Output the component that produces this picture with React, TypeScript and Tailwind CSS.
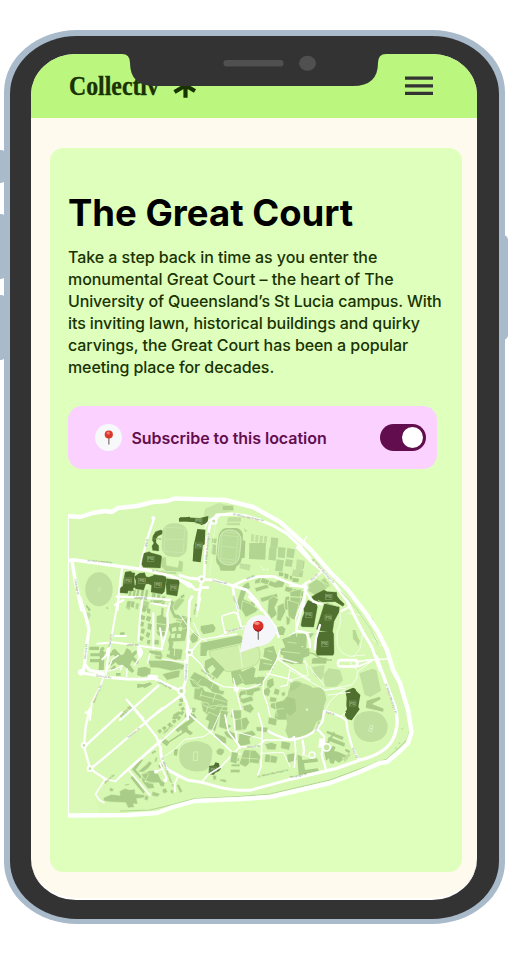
import React from "react";

const GROUND = "#d6f8b2";
const LIGHT = "#bfe09f";
const MID = "#a9cc88";
const DARK = "#4f702f";

type SheetProps = { x: number; y: number; children: React.ReactNode };

/* A map sheet: drawn at three times the scale of the page. */
function Sheet({ x, y, children }: SheetProps) {
  return (
    <g transform={`translate(${x} ${y}) scale(.33333)`} stroke={GROUND} strokeWidth="2">
      {children}
    </g>
  );
}

function Road({ d, w = 7 }: { d: string; w?: number }) {
  return <path d={d} fill="none" stroke="#fff" strokeWidth={w} strokeLinejoin="round" strokeLinecap="round" />;
}

function Gaps({ d, w = 3 }: { d: string; w?: number }) {
  return <path d={d} fill="none" stroke={GROUND} strokeWidth={w} />;
}

function Street({ x, y, r = 0, children }: { x: number; y: number; r?: number; children: string }) {
  return (
    <text transform={`translate(${x} ${y}) rotate(${r})`} fontSize="8" fill="#76905c" stroke="none" fontFamily="Inter, sans-serif">
      {children}
    </text>
  );
}

function Parking({ x, y }: { x: number; y: number }) {
  return (
    <g>
      <rect x={x - 10} y={y - 7} width="20" height="15" fill="none" stroke="#9db483" strokeWidth="1.3" />
      <text x={x} y={y + 4} fontSize="9" fontWeight="600" textAnchor="middle" fill="#b5ca9d" stroke="none" fontFamily="Inter, sans-serif">
        P10
      </text>
    </g>
  );
}

function CampusMap() {
  return (
    <svg viewBox="68 490 360 335" className="block h-[335px] w-[360px]">
      <path
        fill={GROUND}
        d="M68 516L80 517L93 513L112 510L118 508L137 506L153 502L167 501L175 498L225 500L253 507L280 522L310 549L330 572L348 590L367 615L378 632L387 650L393 670L400 683L408 710L412 732L408 743L400 752L387 762L357 773L330 783L300 790L270 797L240 799L195 801L173 807L157 813L68 815Z"
      />
      <path fill="#ddfcbb" opacity=".6" d="M68 562L75 562L82 592L89 640L84 672L98 673L100 680L92 712L82 745L90 769L106 778L94 794L100 813L68 815Z" />

      <Sheet x={60} y={490}>
        <rect x="306" y="100" width="76" height="101" rx="30" fill={LIGHT} stroke="none" transform="rotate(3 344 150)" />
        <path d="M316 112L374 115L370 188L312 184ZM314 148H372" fill="none" stroke="#d0ecb5" strokeWidth="1.5" />
        <path d="M302 203L318 200L320 226L353 232L357 210L370 215L368 246L318 244L303 230Z" fill={MID} opacity=".7" />
        <ellipse cx="117" cy="298" rx="41" ry="51" fill={LIGHT} stroke="none" />
        <ellipse cx="118" cy="299" rx="2.500" ry="7" fill="none" stroke="#d8f2be" strokeWidth="1.500" />
        <path d="M80 344l10 13-12-5ZM140 350l6 5-6 2Z" fill={MID} stroke="none" />
        <path d="M208 298l9 2-5 24-9-2ZM220 298l9 1-4 25-9-2ZM231 297l9 2-5 25-9-2ZM244 296l9 3-4 34-10-3ZM257 298l9 2-5 32-9-2ZM276 306l13 3-6 35-12-2ZM291 311l12 2-5 30-11-3ZM306 317l12 2-5 27-11-2Z" fill={MID} />
        <path d="M200 336l17-4-8 30-12-8ZM250 330l18 5-3 23-18-6ZM337 340l25-20 13 10-26 32-15-5ZM227 338l12 3-5 18-9-2Z" fill={MID} opacity=".75" />
        <Road d="M25 211L45 210L130 222L185 230L260 240L330 258L358 268L390 290" w={10} />
        <Road d="M35 210L47 280L65 360" w={10} />
        <Road d="M282 86L262 145L240 232M187 230L180 280L172 360M170 320L240 322L330 330M190 330L165 345" w={7} />
        <circle cx="280" cy="84" r="6" fill="#fff" stroke="none" />
        <path d="M196 246l17-2 3 4 9 1-3 14 2 26-5 7 1 6h-16l-1 8-23-2 1-14 8-6 2-20ZM238 250l16-2 4 12 8 2 11-4 3-1 1-3 27 3 9 3 2 8-6 37-7 7-33-6 2-20-10-5-8 1-6 18-25-4 2-23-5-13ZM320 266l36 4 2 8-7 40-31-5-2-30ZM252 190l16-5 4 3 28 8 5 3-4 35-51-2-5-9 3-17ZM279 138l8-13 15-5 5 2-1 10-12 6-6 8v12l8 9v16l-18-2-2-13 6-9-5-8Z" fill={DARK} stroke={DARK} strokeWidth="1" />
        <path d="M357 84l33-4v12l-33 3Z" fill={DARK} stroke="none" />
        <path d="M218 286l17 0-5 8-14-2Z" fill={DARK} stroke="none" />
        <Parking x={204} y={271} /><Parking x={246} y={272} /><Parking x={294} y={285} /><Parking x={341} y={292} /><Parking x={272} y={207} />
        <Street x={82} y={214} r={5}>Sir Fred Schonell Dr</Street>
        <Street x={275} y={244} r={7}>Sir Fred Schonell Dr</Street>
        <Street x={43} y={268} r={80}>Coldridge St</Street>
        <Street x={260} y={170} r={-78}>Mill St</Street>
        <Street x={278} y={151}>P9 P10</Street>
        <Street x={222} y={328}>Upland Rd</Street>
      </Sheet>

      <Sheet x={180} y={490}>
        <path d="M75 56l42-17 46 12-4 12-55 12-12 11-22 2Z" fill={LIGHT} stroke="none" opacity=".7" />
        <path d="M126 46l34 0 2 16-35 0Z" fill={MID} opacity=".8" />
        <path d="M0 82l60 2 25-6-2 20-18 7-20-8L0 94Z" fill={DARK} stroke="none" />
        <path d="M52 117l24 2-2 44-5 3-7 51-24-3 3-48Z" fill={DARK} stroke="none" />
        <Parking x={56} y={92} /><Parking x={57} y={166} />
        <path d="M115 142q2-22 22-28h34q15 5 18 20l-1 16 8 3-2 50-9 2q-1 16-15 24l-6 13h-42l-5-15q-12-10-8-27Z" fill={MID} stroke="none" />
        <rect x="116" y="120" width="65" height="105" rx="29" fill="#b9dc98" stroke="#e1f5cb" strokeWidth="2" transform="rotate(6 149 172)" />
        <path d="M126 125l50 5-10 90-44-6ZM123 168l46 5M125 135l48 5M122 205l44 6" fill="none" stroke="#d2ebb9" strokeWidth="1.500" />
        <path d="M96 145l15 1-3 14-13-2ZM97 162l11 3-1 29-13-2ZM208 159l50 0-2 50-49-2Z" fill={MID} stroke="none" opacity=".8" />
        <path d="M145 82h38v13h-42ZM141 98h39v8h-40ZM180 220l32 4-3 18-31-7ZM190 114l13 8-7 5Z" fill={LIGHT} stroke="none" />
        <path d="M214 133h8l-1 22-8-1ZM227 135h9l-2 22-9-1ZM240 137h9l-2 22-9-1ZM253 138h9l-2 20-9-1Z" fill={LIGHT} stroke="none" />
        <path d="M273 142l22 3-3 30-21-3ZM268 172l22 3-3 37-22-3ZM295 171l22 2-3 32-21-3ZM290 208l22 3-5 34-22-3ZM322 174l23 4-4 27-22-3ZM318 207l21 3-4 21-21-3ZM352 211l22 3-3 23-22-3ZM349 240l21 2-3 20-22-3Z" fill="#b5d896" stroke="none" />
        <path d="M297 246l14 3-2 10-13-2ZM314 250l12 3-2 13-11-1ZM330 257l7 1-1 11-7-1ZM338 263l19 3-2 11-18-2Z" fill={MID} stroke="none" />
        <path d="M244 228v7M246 239h11M262 242v-8" stroke="#fff" />
        <path d="M183 296q8-17 24-20l4 16-13 15-7 20 22 10 6-18 12 10-10 31h-45l-5-24ZM225 270l20-8 40 15 12-8 20 5-9 18-21 2-44-16-19 4ZM224 294l39-12 4 12-39 12ZM240 324l51-14 3 12-49 15ZM317 288l63 18-5 17-62-20ZM316 320l14-2-4 24 28 4-2 14h-42ZM340 315l35 10-4 25-33-8Z" fill={MID} />
        <Gaps d="M246 262L240 276M270 270L264 284M340 294L337 308M360 298L356 316M200 300L214 300" />
        <path d="M0 318l12-7 3 9-12 8Z" fill={MID} />
        <Road d="M0 256L30 265L57 267L100 270L158 287L200 300L232 335L245 360" w={9} />
        <Road d="M72 260L76 180L90 103M66 267L58 310L53 360M158 287L162 315L175 360M158 287L195 270L232 260L280 259L315 274L350 286L390 294M376 290L370 360M62 299L45 298L30 282L0 269M69 293L84 292" w={8} />
        <Road d="M96 94L110 75L155 72L195 77L240 90L280 107L320 130L360 168L390 205" w={9} />
        <Road d="M75 115L80 100L91 88L112 86L120 73M380 140L365 165" w={4} />
        <circle cx="101" cy="93" r="8" fill={LIGHT} stroke="#fff" strokeWidth="7" />
        <circle cx="65" cy="267" r="8" fill={LIGHT} stroke="#fff" strokeWidth="7" />
        <Road d="M107 96L101 140L89 255" w={1} />
        <Street x={158} y={75} r={12}>Sir William MacGregor Dr</Street>
        <Street x={80} y={222} r={-85}>Sir William MacGregor Dr</Street>
        <Street x={96} y={274} r={12}>Schonell Rd</Street>
        <Street x={200} y={269} r={-20}>Mill Rd</Street>
        <Street x={158} y={318} r={72}>Glasshouse</Street>
      </Sheet>

      <Sheet x={290} y={550}>
        <path d="M20 28l20 3-4 38-18-5ZM10 58l20 3-5 20-20-4Z" fill={LIGHT} stroke="none" />
        <path d="M55 104l25-17 39 20-37 33-28-17ZM92 90l12-7 18 24-9 8Z" fill={MID} opacity=".75" />
        <path d="M0 125l34-8-4 52-18 35-12-4Z" fill={MID} />
        <path d="M0 250l52 0-2 45-12 2-4 45H0ZM56 248l18 2-14 17ZM64 342l2-18 27-3 20 3-4 18Z" fill={MID} />
        <path d="M38 305l32 6 28 18 28 1" fill="none" stroke={MID} strokeWidth="4" />
        <Gaps d="M0 140L32 142M0 165L28 168M0 268L26 268M20 250L20 260M0 290L40 290M16 300V340" />
        <path d="M64 141l13-8 25-13 10 5 28 2 1 11 7 10 15 14-4 7-23-14-36 1-14-1-15-6ZM54 151l12 4 13 6 3 10-11 60-35-1-3-4 4-22 6-15-2-12ZM103 162l7-2 38 11-1 15-15 28-5 34-45-7-2-5ZM85 246l43 0 3 6 1 58-3 6H82l-3-5V250Z" fill={DARK} stroke={DARK} strokeWidth="1" />
        <path d="M84 150L100 161L96 170M104 160L145 169" fill="none" stroke={GROUND} strokeWidth="2" />
        <Parking x={56} y={195} /><Parking x={115} y={202} /><Parking x={104} y={281} /><Parking x={116} y={140} />
        <path d="M188 240l8 0 8 24 6 9-6 16-5-12-10-10ZM240 205l7-2 3 11-7-1Z" fill={MID} stroke="none" opacity=".7" />
        <Road d="M0 106L35 109L46 100L66 90L95 65M47 103L47 125L70 155L95 163M47 120L35 175L18 242L38 245L50 250L59 275L60 292M75 298L78 265L90 225M155 183L175 172" w={7} />
        <Road d="M22 -8L62 33L95 60L130 98L170 150L190 190L215 240L245 290L270 360" w={9} />
        <Road d="M150 183Q155 230 141 245L142 285Q155 315 180 319L225 315M248 268L275 288M220 240L211 295L190 320M175 190L215 196L225 215L263 270" w={2} />
        <rect x="144" y="330" width="59" height="19" rx="8" fill="none" stroke="#fff" strokeWidth="7" />
        <Road d="M203 335L235 330L290 327M203 350L245 332" w={5} />
        <path d="M152 124l46 50 45 66 22 45" fill="none" stroke="#bfe1a0" strokeWidth="3" />
        <Street x={66} y={30} r={48}>Sir William MacGregor Dr</Street>
        <Street x={65} y={93} r={-42}>Blair Dr</Street>
      </Sheet>

      <Sheet x={60} y={600}>
        <path d="M75 42q12-12 18 3l-10 18Z" fill={LIGHT} stroke="none" />
        <path d="M77 13l16 17-7 4ZM140 22l5 2-3 2ZM203 3l8 1-3 17-8-2ZM214 4l10 1-3 18-8-2ZM181 97l13 0-1 8-14-1ZM168 219h14v8h-14Z" fill={MID} stroke="none" />
        <path d="M89 140h28v10H88ZM122 143l8-3 4 7-5 5 5 4-3 54-15 0 1-23H90v-10h29v-8H91v-9h27ZM132 158l12-8 5 8-9 12Z" fill={MID} stroke="none" />
        <path d="M157 150l8-4 18 20 8-3 9-19 11 7 4 9 14-10 5 6-13 14 16 15-6 8-15-12-6 13 13 19-7 6-28-25-13 1-8-8-15 12-7-7 22-20-7-8-7 5-6-6 8-7ZM151 206l12-10 6 6-12 10ZM234 204l22-4 16 6-2 22-24 2-15-5ZM231 251l20 2 20-6 5 6-21 11-8-3-15 4Z" fill={MID} stroke="none" />
        <path d="M249 17l9 0 2 14-6 6-9-3ZM261 25l11 2-2 14-9-3ZM243 44l13 5-3 12-11-3ZM262 47l12 5-5 13-12-5ZM244 64l9 4-4 13-10-4ZM264 70l12 3-3 18-11-5ZM245 85l10 3-3 14-10-4ZM261 96l10 4-5 14-9-6ZM241 108l11 4-5 11-9-4ZM263 119l9 2-4 14-8-6Z" fill={MID} stroke="none" />
        <path d="M276 0h33v8l-28 4ZM289 48l13-4 2-22 8 2-1 25 10 4-5 58-21-4-6-10ZM335 0l10 6-7 15 8 21 43 9v13l-48-10-16-35ZM318 74l32-8 23 3 10 18-7 36-34 3-4 18 31 4-5 30-18 3-28-10 9-36-4-14 8-20ZM284 118l14 2-1 15-20-1ZM268 150l36 4 4 15-6 10-18-4 1-11-19-4ZM263 181l65 0 33 9 14 5-6 14-35 4-39-9-24-1ZM306 222l56-15-5 25-36 9Z" fill={MID} />
        <path d="M336 84l12-4 2 12-14 3ZM355 80l12 2-2 12-9-2ZM334 102l12-2-2 14-11 1ZM352 101l12 2-3 12-11-2ZM322 150l8 2-2 12-8-2Z" fill={GROUND} stroke="none" />
        <Gaps d="M338 126L376 128M345 128L343 168M286 70L316 74M290 92L316 95M268 166L302 168" w={2.5} />
        <path d="M336 357l5-14 9-5 7 6-8 13ZM357 340l10-8 6 5-7 10ZM361 325l10-5 4 9-9 3ZM358 297l13-4-3 13-9 0ZM356 311l11-2-2 8-8 1Z" fill={MID} stroke="none" />
        <Road d="M60 -5L80 58L87 90L78 150L74 192L68 220" w={10} />
        <Road d="M74 192L88 210L133 222M62 218L105 225L140 232L200 237L250 238L283 235L305 246L345 265L365 274M290 230L267 228" w={9} />
        <Road d="M175 -5L160 80L146 160L137 222M112 131L160 127L220 135L306 147M146 160L127 178M130 232L120 260L95 310L90 360M300 85L305 115L306 147M247 0L240 50L235 125M280 40L280 148M330 10L322 40L324 80L305 145M275 10L320 18M165 108L198 108" w={6} />
        <path d="M232 134l14 12 4 12-7 15-8-3-5-16ZM140 145h10l-1 22-14 2Z" fill="#fff" stroke="none" />
        <Road d="M137 213Q155 190 155 180L175 166M110 213Q155 216 172 204L187 197L181 210M200 230l1-24M240 170L223 196M377 155L390 120M375 180L374 262M262 190L270 160M310 178L378 187" w={4} />
        <circle cx="64" cy="217" r="10" fill="#fff" stroke="none" />
        <Road d="M295 257L180 360M200 299L250 356M365 285L270 355L260 365M371 287L385 325L390 360" w={7} />
        <circle cx="365" cy="273" r="9" fill="#c4e6a4" stroke="#fff" strokeWidth="7" />
        <Street x={77} y={178} r={-84}>Carmody Rd</Street>
        <Street x={107} y={229} r={8}>Carmody Rd</Street>
        <Street x={291} y={246} r={28}>Carmody Rd</Street>
        <Street x={103} y={310} r={-68}>Blamoorong Rd</Street>
        <Street x={151} y={140} r={-80}>Walcott St</Street>
        <Street x={200} y={137}>Union Rd</Street>
        <Street x={349} y={63} r={7}>Highside St</Street>
        <Street x={181} y={350} r={-43}>Sherwin Rd</Street>
      </Sheet>

      <Sheet x={180} y={600}>
        <path d="M8 58l20-10 7 8-6 24-20 7-9-13ZM188 2l25 10 22 16-10 10-28 14-13-23ZM265 0l16-12 15 10-12 25 8 20-18 14-12-20ZM292 18l19-10 6 26-15 30-12-3ZM322 0l35 10-12 50-20-7ZM318 48l14 4-3 21-10 3Z" fill={MID} />
        <path d="M62 78l37-6 8 12-5 12-32 7-8-12ZM32 108l10-12 14 9-4 18-14 7-7-11ZM76 126l105-20 8 9-4 14-104 23-2 16h-18l1-39ZM254 145l27-8 8 25-10 21-29-13ZM241 176l26 5 16 6-5 23-42 2ZM278 160l15 5-11 37-6-15ZM306 118l25-9 35 8-2 28h24v22l-18 6v18l-26-4-5 6-32-9 4-17-10-5v-15l15-5ZM292 82l15-4 10 9-6 18-18 0Z" fill={MID} stroke="none" />
        <path d="M89 153l101-21 45 10q13 28-6 51-30 17-83 22-27 0-57-50Z" fill="#d0efaa" stroke="#b4d796" strokeWidth="2" />
        <path d="M177 134l10 68" stroke="#fff" strokeWidth="1.500" />
        <path d="M75 182l23-10 36 36-23 28-18-14 14-15-10-13-15 13 8 14-17-9ZM153 215l28-7 5 7 33-15 8 7-5 24 15 4-5 15-35 5-9-7-18 9-12-9ZM232 230h22l-2 17-10 12-14-8ZM263 241l16-6 3 20-15 12-7-12Z" fill={MID} stroke="none" />
        <path d="M43 215l31 16 43 28 2 11 15 3-4 12-30-6-20-18-28-5-22-23ZM27 237l16 3 20 20-7 7-20-7ZM43 264l24-4 8 13 44 10 25 18-2 20-31-3-8 10-33-12-5-12-24-7ZM62 306l22 3 5 10 36-5 19 8-7 31-50-2-18-17ZM35 322l14 2-4 15-12-2ZM18 336l26 5 7 14-24 4-15-9ZM180 273l59-13 4 11-20 6-5 12-25-5-15 5ZM184 297l32-10 5 15-34 10ZM188 318l24-7 11 15-12 14-20-9ZM250 270l14-10 8 12-5 17-17-3ZM284 264l16 5-4 17-16-3ZM271 290l20 3-3 15-20-3ZM303 279l11-5 3 11-10 5ZM272 310l38-9 13-15 7 20 20 12-4 30-14 12h-50l5-30-16-8Z" fill={MID} />
        <Gaps d="M62 238L52 252M100 250L92 268M66 272L60 292M108 280L98 306M84 318L76 345M128 318L118 350M60 285L140 306M178 222L190 246M262 152L278 156M250 190L276 194M322 126L350 130M306 154L360 160M284 304L292 350M276 330L340 322M196 266L200 284" w={2} />
        <path d="M323 290q0-30 22-38 25-7 45 8v100h-47q4-22-4-38-14-15-16-32Z" fill="#b7d995" stroke="none" />
        <Road d="M63 -8L50 50M0 45Q45 115 80 124M108 112L180 82L210 74M166 8L182 65L183 80M40 68L60 108" w={3} />
        <path d="M126 58q-4-11 8-13l26-8q12-1 13 10l13 40M134 98l52-14M126 58l8 36" fill="none" stroke="#fff" strokeWidth="5" strokeLinecap="round" />
        <Road d="M207 -10L250 32L285 80L296 110M36 -10L28 5L24 120L19 235L4 280L20 310L24 360" w={8} />
        <Road d="M300 150L290 180L265 225L250 245L250 280L263 315L272 360M350 95L347 55L370 -5M345 97L330 105M350 96L390 98M35 165L65 195L90 240L130 260L205 266L242 252M160 235L169 270L183 330M35 153L55 128L65 118L170 102M34 165L47 178M295 178L335 205L390 240M330 208L322 255L302 260M296 173L345 187L375 185M260 220L322 235L345 250" w={4} />
        <circle cx="28" cy="157" r="8" fill={LIGHT} stroke="#fff" strokeWidth="6" />
        <circle cx="4" cy="273" r="9" fill={LIGHT} stroke="#fff" strokeWidth="6" />
        <circle cx="169" cy="268" r="8" fill="#fff" stroke="none" />
        <Street x={44} y={45} r={-77}>Union Rd</Street>
        <Street x={19} y={242} r={-86}>Chancellor Dr</Street>
        <Street x={62} y={212} r={34}>University Dr</Street>
        <Street x={140} y={98} r={-15}>Campbell Rd</Street>
        <Street x={176} y={280} r={78}>Slip Rd</Street>
        <path d="M179 158L194 83Q202 54 228 47Q251 41 269 57L291 91Q281 122 259 133Q243 139 226 142Z" fill="#f5f6fa" stroke="none" />
        <path d="M235 88V119" stroke="#847b78" strokeWidth="4" />
        <circle cx="234.500" cy="78" r="16" fill="#d9302a" stroke="none" />
        <ellipse cx="231" cy="70" rx="8" ry="5" fill="#f39083" stroke="none" />
        <path d="M221 84q12 13 27-1-6 13-15 12-8-1-12-11Z" fill="#a41b26" stroke="none" />
      </Sheet>

      <Sheet x={290} y={660}>
        <path d="M0 78l11-12 31 6 20 6 5 5 26-1 12 16 4 20-8 24 1 16-8 20-15 9-10 24-20 18-30 7-24-3-9-21 5-20-3-31 8-18Z" fill="#b7d995" stroke="none" />
        <path d="M12 0h30l-10 13ZM-5 112l20 4 4 37-18 14-22-14Z" fill={MID} stroke="none" />
        <circle cx="51" cy="149" r="4" fill="#d9f3bd" stroke="none" />
        <path d="M66 21l38-6-3 29-6 15-20-11ZM100 46l16-21 34 5 9 31-20 19-35 0ZM208 40l39-14 12 4 14 62-32 19-17-7ZM191 199q-4-43 47-46 45 0 55 42 1 45-48 51-48 0-54-47Z" fill={LIGHT} stroke="none" />
        <path d="M0 69q20-13 35-1l-12 16-23 11Z" fill={MID} stroke="none" opacity=".6" />
        <path d="M230 122l39-12 3 8-26 14 35 14-2 9-52-12ZM112 212l49 19-4 9-48-21ZM117 230l48 20-2 10-51-19ZM103 276l18-8 8-11 8 5-5 11 12 2 30 14-2 7-26-9 7 11-8 10-9-8-6 12-10-3-3-14-9 7ZM167 266l13 6-2 8-13-8ZM22 284l13 5 2 11 45-5 2 10-42 5 3 20 38-5 5 10-62 10-3-43ZM142 289l14-2 2 13-10 8-8-8Z" fill={MID} stroke="none" />
        <path d="M133 217l-14 22M120 238l-10 15" stroke={MID} strokeWidth="6" />
        <path d="M158 298l18-20 6 7-17 21Z" fill={LIGHT} stroke="none" />
        <path d="M315 261l5 3-2 3ZM325 250l4-3 2 4ZM334 205l4 0 0 5Z" fill={MID} stroke="none" />
        <path d="M166 93l23-10 7 3 3 7 12 12-6 35 4 8-24 33-12-3-8-11 1-12 5-7-2-12 1-23Z" fill={DARK} stroke="none" />
        <Parking x={188} y={130} />
        <Road d="M259 -10L285 60L315 140Q330 190 310 235T210 300L140 325L0 358" w={10} />
        <Road d="M0 240Q55 234 80 207L98 184L102 153L120 157L155 171L169 182L173 213L186 260L205 298M0 240Q-50 225 -70 210M82 207L103 230L95 285L108 329M38 242L42 270L40 283" w={7} />
        <Road d="M155 168L167 157M40 283L54 290M0 30Q70 70 105 90L166 85M105 90L185 75L200 55L202 35L250 0M114 105L180 97M180 7L200 30M40 0L105 78M108 149Q120 110 165 90M0 60L55 45L45 0" w={2.5} />
        <rect x="144" y="1" width="57" height="19" rx="8" fill="none" stroke="#fff" strokeWidth="7" />
        <path d="M88 235l15 2 4 17-5 9h-17Z" fill="#fff" stroke="none" />
        <circle cx="110" cy="262" r="11" fill="#c4e6a4" stroke="#fff" strokeWidth="5" />
        <circle cx="66" cy="285" r="9" fill="none" stroke="#fff" strokeWidth="4" />
        <path d="M241 196l8 2-5 18-8-3ZM239 206l9 0" fill="none" stroke="#e1f6cd" strokeWidth="2" />
        <Street x={106} y={158} r={18}>Staff Dr</Street>
        <Street x={77} y={216} r={-65}>Union Rd</Street>
        <Street x={185} y={264} r={66}>Union Rd</Street>
        <Street x={285} y={72} r={71}>Sir William MacGregor Dr</Street>
        <Street x={0} y={354} r={-11}>Macgregor Dr</Street>
      </Sheet>

      <Sheet x={60} y={710}>
        <path d="M360 116q10-21 52-23 42 8 45 28-1 59-29 62-55 7-68-28-5-15 0-39Z" fill={LIGHT} stroke="none" />
        <path d="M401 127l12-2v26l-12 1Z" fill="none" stroke="#e2f6cd" strokeWidth="2" />
        <path d="M343 116l11 2-3 19-10-1Z" fill={MID} stroke="none" />
        <path d="M292 63l8-6 6 5-6 9ZM305 54l9-6 6 5-6 9ZM321 44l9-7 6 6-7 9ZM335 34l9-7 6 6-7 8ZM349 24l8-7 7 5-8 10ZM347 10l9-6 7 4-8 9Z" fill={MID} stroke="none" />
        <path d="M345 59l51-36 8 9-22 17 3 10 14 9-8 8-14-10-48 31-8 12-18-14 6-12 17 11 41-27-4-8-9 8Z" fill={MID} stroke="none" />
        <path d="M447 6l31 15-12 43-25-8 6-22-12-6ZM481 0l25 4-10 34 19 9-11 13-28-8ZM463 68l35 14 2 19-19-2-16-16ZM491 66l14-6 23 12 1 23-30-15ZM516 0l-4 22 19 7 3 22 10 5V0ZM468 122l10-8 14 4 1 9-9 10-13-4ZM514 144h24v10h-26ZM514 162h26v8h-27ZM512 178h28v10h-30ZM457 197l12-2 1 12-9 5ZM478 207l20 1 2 10-19-4Z" fill={MID} />
        <path d="M130 263l24-10 26 3-2-12 17-9 14 4 16-2 1 14 31 3-3 9-24 3 4 16-14 0 4 10-20 2-7-16-50-2-17-4ZM151 232l11 6-5 8-10-4ZM194 223l13-2 1 5-14 2ZM210 203l9-7 37 50-6 6ZM215 178l28-33 7 5-22 29 20 23-8 4ZM233 185l24-20 11-12 9 6-12 16-16 12ZM260 185q25-11 35 7l8 17 12 10-3 12-11-2-5-11-28 2-15-13-10-15ZM244 193l17-5 5 6-12 21 24 2 6 17-20 3-18-23ZM274 127l11-7 5 5-13 8ZM287 141l6 1-3 13-8 2ZM293 166l17-7 5 9-17 8ZM253 252l13 8-3 12-10-3ZM277 244l24 7-8 10-18-4ZM307 237l11-3 5 12-9 5-7-5ZM333 238l9 3-3 12-9-6ZM349 225l8-2 11 21-8 6Z" fill={MID} />
        <path d="M447 168l15-2 4-9 11 3 2 11 4 5-7 8-11 5-3 5-16-1Z" fill={DARK} stroke="none" />
        <Parking x={459} y={178} />
        <Road d="M90 -5L86 10L77 50L72 110L90 175L110 190L136 207M80 104L185 7M98 171L130 145L306 -5M225 0L259 42L290 82L303 120" w={7} />
        <Road d="M136 207L106 253L118 270L132 278M136 207L166 214L192 187L295 96M170 210L310 88L380 25L395 0M192 187L205 180L280 111M205 180L270 256M288 185L305 178M300 160L320 205" w={5} />
        <path d="M72 7l15-8 9 2-6 20ZM292 91l10-3 4 10-14 7Z" fill="#fff" stroke="none" />
        <circle cx="72" cy="106" r="7" fill={LIGHT} stroke="#fff" strokeWidth="6" />
        <circle cx="90" cy="176" r="7" fill={LIGHT} stroke="#fff" strokeWidth="6" />
        <circle cx="288" cy="185" r="6" fill="#fff" stroke="none" />
        <circle cx="316" cy="211" r="6" fill="#fff" stroke="none" />
        <Road d="M301 112Q304 168 328 182T385 211L425 217L480 232Q520 242 570 241L690 208" w={9} />
        <Road d="M385 10L420 40L455 70L515 125L540 132M517 0L530 90L540 115M425 217L444 194L483 170L540 110M355 198L344 220L345 245" w={5} />
        <Road d="M315 138L350 113L373 89L430 80L455 65L480 10" w={3} />
        <Street x={184} y={23} r={-42}>Sherwin Rd</Street>
        <Street x={205} y={85} r={-39}>Rosebery St</Street>
        <Street x={134} y={222} r={-40}>Upland Rd</Street>
        <Street x={310} y={72} r={-38}>Upland Rd</Street>
        <Street x={303} y={143} r={69}>Sir William MacGregor Dr</Street>
      </Sheet>

      <Sheet x={235} y={715}>
        <path d="M0 15l35-9 9 16-12 22-30 3ZM12 56l40-10 12 13-20 10 3 18-30 8-8-13ZM63 35l37 2-5 16-31-5ZM101 6l26 6-4 21-25-7ZM27 104l34 2 16 18-6 23-24-4-16 13-19-9ZM89 87l19-5 18 5-4 18-25-1ZM91 116l38 9-5 20-36-4ZM139 78l28 5-4 23-26-6ZM155 118l26-5 5 22-28 10ZM-10 110l20 3-5 34-20-6Z" fill={MID} />
        <Gaps d="M18 10L22 46M46 106L42 150M10 128L70 132M108 118L104 144" w={2} />
        <Road d="M-30 0L-20 50L15 95L65 95L90 75L165 75M70 -5L82 35L80 95L78 155L68 180M165 75L178 65L182 105L178 157" w={5} />
        <Road d="M0 50L82 72M80 115L145 112L165 155" w={3} />
        <Street x={36} y={99} r={-5}>Walcott St</Street>
        <Street x={68} y={188} r={-13}>Sir William MacGregor Dr</Street>
      </Sheet>

      <path fill="none" stroke="#b4d796" strokeWidth="1.200" d="M410 730L407 740L399 748L387 759L357 770L330 780L300 787L270 794L240 796.500L195 798.500L173 804.500L150 810L120 811" />
      <path
        fill="none"
        stroke="#fff"
        strokeWidth="4.400"
        strokeLinejoin="round"
        d="M68 516L80 517L93 513L105 511L112 512L118 508L137 506L153 502L167 501L175 498.500L190 499L225 500L253 507L280 522L310 549L330 572L348 590L367 615L378 632L387 650L393 670L400 683L408 710L411.500 732L408 743L400 751L387 762L380 763L357 773L330 783L300 790L270 797L240 799L195 801L173 807L157 813L128 815L68 815.500"
      />
      <path d="M68.500 516V815" stroke="#fff" strokeWidth="1" />
    </svg>
  );
}

function Notch() {
  return (
    <svg viewBox="0 0 264 33" className="absolute left-[91px] top-[-1px] h-[33px] w-[264px]" aria-hidden="true">
      <path d="M0 0H264V1Q256 1 256 10Q256 33 231 33H33Q8 33 8 10Q8 1 0 1Z" fill="#333" />
      <rect x="101.500" y="7" width="60" height="6.500" rx="3.200" fill="#505050" />
      <ellipse cx="185.500" cy="10.300" rx="8.500" ry="7.500" fill="#505050" />
    </svg>
  );
}

function PinIcon() {
  return (
    <svg viewBox="0 0 27 27" className="size-[27px]" aria-hidden="true">
      <circle cx="13.500" cy="13.500" r="13.500" fill="#f7f8fa" />
      <path d="M13.800 12V20.500" stroke="#958a87" strokeWidth="1.500" />
      <circle cx="13.800" cy="10.500" r="4.100" fill="#d9382f" />
      <circle cx="13.200" cy="9" r="1.600" fill="#f17c6f" />
    </svg>
  );
}

export default function App() {
  return (
    <main className="relative h-[957px] w-[508px] overflow-hidden bg-white pl-[3.5px] pt-[30px] font-['Inter',sans-serif]">
      <span className="absolute left-[-6px] top-[150px] h-[33px] w-[12px] rounded-[5px] bg-[#a9bacb]" />
      <span className="absolute left-[-6px] top-[214px] h-[65px] w-[12px] rounded-[5px] bg-[#a9bacb]" />
      <span className="absolute left-[-6px] top-[295px] h-[65px] w-[12px] rounded-[5px] bg-[#a9bacb]" />
      <span className="absolute left-[496px] top-[235px] h-[105px] w-[12px] rounded-[5px] bg-[#a9bacb]" />
      <div className="relative h-[894px] w-[501px] rounded-[73px/62px] bg-[#a9bacb] px-[6px] py-[5.5px]">
        <div className="h-full rounded-[67px/58px] bg-[#333] pl-[21.5px] pt-[18.5px]">
          <div className="relative h-[846px] w-[446px] overflow-hidden rounded-[45px/41px] border-b-2 border-white bg-[#fffaee]">
            <header className="flex h-[64px] items-center justify-between bg-[#bbf77f] pl-[38px] pr-[44px]">
              <div className="flex items-center">
                <span className="w-[104px] origin-left scale-x-[0.85] whitespace-nowrap font-['Liberation_Serif',serif] text-[28px] font-bold leading-[32px] text-[#193300] [-webkit-text-stroke:0.4px_#193300]">
                  Collectiv
                </span>
                <svg viewBox="0 0 24 24" className="mt-[2px] h-[24px] w-[24px]" aria-hidden="true">
                  <path d="M12.500 10.500V22.700M12.500 10.500L1.500 17M12.500 10.500L22 16M12 11L2 5M12 11L22 5M12 11V0" stroke="#193300" strokeWidth="4.200" />
                </svg>
              </div>
              <svg viewBox="0 0 28 20" className="h-[20px] w-[28px]" aria-hidden="true">
                <path d="M0 2.200H28M0 9.800H28M0 17.300H28" stroke="#333" strokeWidth="3.200" />
              </svg>
            </header>
            <section className="ml-[19px] mt-[30px] h-[724px] w-[412px] rounded-[13px] bg-[#dfffbd] px-[18px] pt-[42px]">
              <h1 className="whitespace-nowrap text-[36.5px] font-bold leading-[46px] text-black">The Great Court</h1>
              <p className="mt-[10px] whitespace-nowrap text-[16px] font-medium leading-[22px] tracking-[-0.05px] text-[#193300]">
                Take a step back in time as you enter the<br />
                monumental Great Court – the heart of The<br />
                <span className="tracking-[-0.13px]">University of Queensland<span className="tracking-[-1.4px]">’</span>s St Lucia campus. With</span><br />
                <span className="tracking-[-0.09px]">its inviting lawn, historical buildings and quirky</span><br />
                <span className="tracking-[-0.07px]">carvings, the Great Court has been a popular</span><br />
                <span className="tracking-[-0.09px]">meeting place for decades.</span>
              </p>
              <div className="mt-[28px] flex h-[63px] w-[369px] items-center rounded-[14px] bg-[#fbd2ff] pl-[27px] pr-[11px]">
                <PinIcon />
                <span className="ml-[9.5px] flex-1 whitespace-nowrap text-[16px] font-semibold tracking-[-0.04px] text-[#620e4e]">Subscribe to this location</span>
                <span className="flex h-[27px] w-[46px] items-center justify-end rounded-full bg-[#620e4e] pr-[3px]">
                  <span className="size-[21px] rounded-full bg-white" />
                </span>
              </div>
              <div className="mt-[21px]">
                <CampusMap />
              </div>
            </section>
            <Notch />
          </div>
        </div>
      </div>
    </main>
  );
}
